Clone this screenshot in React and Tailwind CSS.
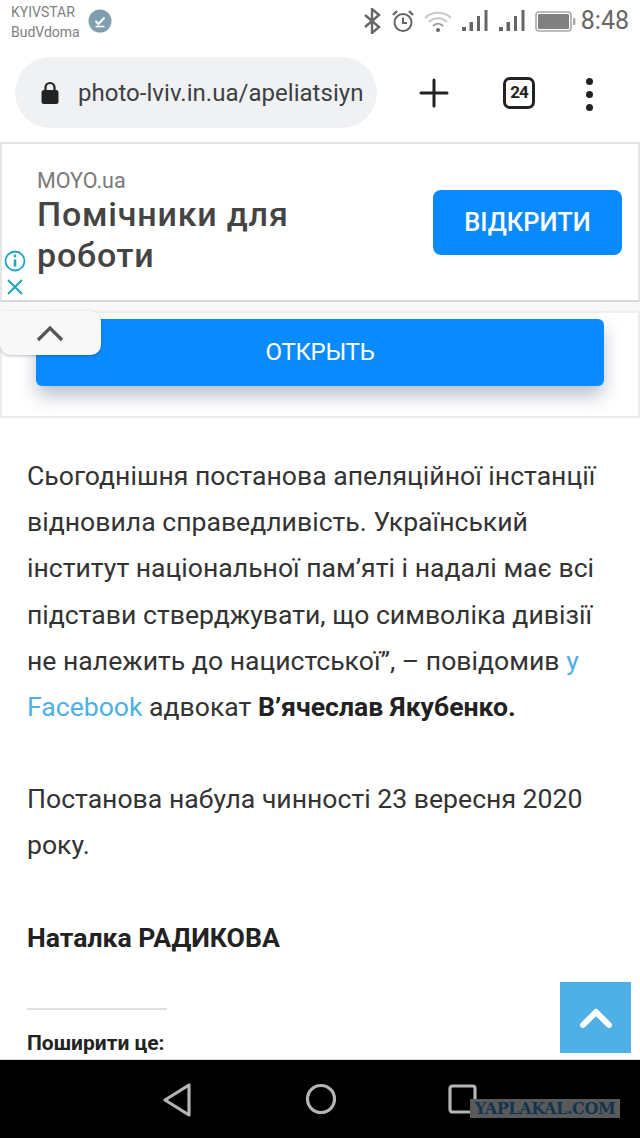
const R = { fontFamily: 'Roboto, sans-serif' };

function StatusBar() {
  return (
    <div className="h-[43px] flex items-start justify-between pl-[11px] pr-[11px] text-[#6f6f6f]">
      <div className="flex items-start gap-[8px]">
        <div className="flex flex-col text-[14px] leading-[20px] pt-[2px] text-[#808080]">
          <span>KYIVSTAR</span>
          <span>BudVdoma</span>
        </div>
        <svg width="24" height="24" viewBox="0 0 24 24" className="mt-[9px]">
          <circle cx="12" cy="12" r="11.5" fill="#7f9fae" />
          <path d="M7.5 12l3 3 6-6.5" fill="none" stroke="#fff" strokeWidth="2" />
          <path d="M7.5 17.5h9" stroke="#fff" strokeWidth="1.6" />
        </svg>
      </div>
      <div className="flex items-center gap-[9px] pt-[8px]">
        <svg width="19" height="26" viewBox="0 0 19 26" fill="none" stroke="#666" strokeWidth="2.4">
          <path d="M2 7l14 12-7 6V1l7 6L2 19" />
        </svg>
        <svg width="24" height="24" viewBox="0 0 24 24" fill="none" stroke="#666" strokeWidth="2">
          <circle cx="12" cy="13.5" r="8.5" />
          <path d="M12 8.5v5.5h4" />
          <path d="M2 6l4-4M22 6l-4-4" strokeWidth="2.4" />
        </svg>
        <svg width="30" height="22" viewBox="0 0 30 22" fill="none" stroke="#c9c9c9" strokeWidth="2" className="-ml-[1px]">
          <path d="M2 8c7-7 19-7 26 0" />
          <path d="M6 12c5-5 13-5 18 0" />
          <path d="M10 16c3-3 7-3 10 0" stroke="#9a9a9a" />
          <circle cx="15" cy="20" r="2" fill="#666" stroke="none" />
        </svg>
        <div className="flex gap-[10px] items-end">
          {[0, 1].map((k) => (
            <svg key={k} width="27" height="22" viewBox="0 0 27 22" fill="#666">
              <rect x="0" y="17" width="4" height="4" />
              <rect x="7.5" y="12" width="3.5" height="9" />
              <rect x="15" y="6" width="3" height="15" />
              <rect x="22.5" y="0" width="3" height="21" />
            </svg>
          ))}
        </div>
        <svg width="41" height="21" viewBox="0 0 41 21">
          <rect x="1" y="1" width="35" height="19" rx="3" fill="none" stroke="#a8a8a8" strokeWidth="1.6" />
          <rect x="3" y="3" width="31" height="15" rx="1" fill="#808080" />
          <rect x="38" y="7" width="2.4" height="7" rx="1" fill="#a8a8a8" />
        </svg>
        <span className="text-[25px] leading-[26px] text-[#666] -ml-[4px]">8:48</span>
      </div>
    </div>
  );
}

function Toolbar() {
  return (
    <div className="h-[100px] flex items-start pl-[15px] pt-[14px]">
      <div className="w-[362px] h-[71px] rounded-[36px] bg-[#f0f1f3] flex items-center pl-[25px] overflow-hidden">
        <svg width="20" height="24" viewBox="0 0 20 24" className="shrink-0">
          <path d="M5.5 10V6.5a4.5 4.5 0 0 1 9 0V10" fill="none" stroke="#222" strokeWidth="2.2" />
          <rect x="1.5" y="9" width="17" height="14" rx="2.5" fill="#222" />
        </svg>
        <span className="ml-[18px] text-[24px] leading-[30px] text-[#3c4043] whitespace-nowrap tracking-[0.03px]">
          photo-lviv.in.ua/apeliatsiyn
        </span>
      </div>
      <svg width="32" height="32" viewBox="0 0 32 32" className="ml-[41px] mt-[20px]" fill="none" stroke="#222" strokeWidth="3" strokeLinecap="round">
        <path d="M16 3v26M3 16h26" />
      </svg>
      <div className="ml-[53px] mt-[20px] w-[32px] h-[32px] rounded-[7px] border-[3px] border-[#222] flex items-center justify-center text-[17px] font-bold text-[#222] tracking-[-1px]">
        24
      </div>
      <div className="ml-[51px] mt-[21px] flex flex-col gap-[6px]">
        <div className="w-[7px] h-[7px] rounded-full bg-[#222]" />
        <div className="w-[7px] h-[7px] rounded-full bg-[#222]" />
        <div className="w-[7px] h-[7px] rounded-full bg-[#222]" />
      </div>
    </div>
  );
}

function Ad() {
  return (
    <div className="relative -mt-[1px] h-[160px] border-[2px] border-[#e4e4e4] border-b-[#d8d8d8] bg-white flex items-start justify-between pl-[35px] pr-[16px]">
      <div className="pt-[25px]">
        <div className="text-[21.5px] leading-[24px] text-[#7a7a7a]">MOYO.ua</div>
        <div className="text-[34px] leading-[41px] font-medium text-[#444] tracking-[0.8px] mt-[1px] w-[320px]">
          Помічники для роботи
        </div>
      </div>
      <div className="mt-[46px] w-[189px] h-[65px] rounded-[8px] bg-[#0a8aff] text-white text-[25.5px] font-medium flex items-center justify-center">
        ВІДКРИТИ
      </div>
      <div className="absolute left-[2px] bottom-[4px] flex flex-col items-center gap-[6px]">
        <svg width="22" height="22" viewBox="0 0 22 22" fill="none" stroke="#1ca6c4" strokeWidth="1.8">
          <circle cx="11" cy="11" r="9.5" />
          <path d="M11 9.5v7" strokeWidth="2.6" />
          <circle cx="11" cy="6" r="1.4" fill="#1ca6c4" stroke="none" />
        </svg>
        <svg width="18" height="18" viewBox="0 0 18 18" fill="none" stroke="#1ca6c4" strokeWidth="2">
          <path d="M2 2l14 14M16 2L2 16" />
        </svg>
      </div>
    </div>
  );
}

function OpenBlock() {
  return (
    <>
      <div className="h-[9px] bg-[#f8f8f8]" />
      <div className="relative h-[107px] border-[2px] border-[#ececec] border-t-[#f0f0f0] bg-white pl-[34px] pr-[34px] pt-[6px]">
        <div className="h-[67px] rounded-[6px] bg-[#0a8aff] text-white text-[24px] flex items-center justify-center shadow-[0_10px_18px_rgba(60,80,110,0.35)] tracking-[-0.3px] pb-[2px]">
          ОТКРЫТЬ
        </div>
        <div className="absolute -left-[2px] -top-[2px] w-[101px] h-[44px] rounded-b-[10px] rounded-tr-[10px] bg-[#f8f8f8] shadow-[0_1px_3px_rgba(0,0,0,0.25)] flex items-center pl-[36px]">
          <svg width="28" height="18" viewBox="0 0 28 18" fill="none" stroke="#555" strokeWidth="3.2">
            <path d="M2 16L14 4l12 12" />
          </svg>
        </div>
      </div>
    </>
  );
}

function Article() {
  return (
    <div className="flex-1 px-[27px] pt-[35px] text-[26.6px] leading-[46.2px] text-[#333] overflow-hidden">
      <p className="whitespace-nowrap">Сьогоднішня постанова апеляційної інстанції</p>
      <p className="whitespace-nowrap">відновила справедливість. Український</p>
      <p className="whitespace-nowrap">інститут національної пам’яті і надалі має всі</p>
      <p className="whitespace-nowrap">підстави стверджувати, що символіка дивізії</p>
      <p className="whitespace-nowrap">
        не належить до нацистської”, – повідомив <span className="text-[#4fb0e8]">у</span>
      </p>
      <p className="whitespace-nowrap">
        <span className="text-[#4fb0e8]">Facebook</span> адвокат <b className="font-bold text-[#222]">В’ячеслав Якубенко.</b>
      </p>
      <p className="mt-[46px] whitespace-nowrap">Постанова набула чинності 23 вересня 2020</p>
      <p>року.</p>
      <p className="mt-[46px] font-bold text-[#222]">Наталка РАДИКОВА</p>
      <div className="mt-[47px] w-[140px] h-[2px] bg-[#e0e0e0]" />
      <p className="mt-[18px] text-[21px] leading-[30px] font-bold text-[#222]">Поширити це:</p>
    </div>
  );
}

function NavBar() {
  return (
    <div className="relative h-[79px] shrink-0 bg-black flex items-start justify-center gap-[111px] pt-[23px] border-t border-t-[#d8d8d8]">
      <svg width="32" height="34" viewBox="0 0 32 34" fill="none" stroke="#b5b5b5" strokeWidth="3.2" strokeLinejoin="round">
        <path d="M27 2v30L3 17z" />
      </svg>
      <svg width="32" height="32" viewBox="0 0 32 32" fill="none" stroke="#b5b5b5" strokeWidth="3.2">
        <circle cx="16" cy="16" r="13.5" />
      </svg>
      <svg width="30" height="30" viewBox="0 0 30 30" fill="none" stroke="#b5b5b5" strokeWidth="3.2" className="mt-[1px]">
        <rect x="2" y="2" width="25" height="26" rx="2.5" />
      </svg>
      <div className="absolute left-[470px] top-[39px] w-[150px] h-[19px] bg-[#5a5a5a] flex items-center justify-center text-[16px] leading-[19px] font-bold text-[#12344f]" style={{ fontFamily: '"DejaVu Serif", serif', letterSpacing: '-0.4px' }}>
        YAPLAKAL.COM
      </div>
    </div>
  );
}

export default function App() {
  return (
    <div className="relative w-[640px] h-[1138px] bg-white flex flex-col overflow-hidden" style={R}>
      <StatusBar />
      <Toolbar />
      <Ad />
      <OpenBlock />
      <Article />
      <NavBar />
      <div className="absolute left-[560px] top-[982px] w-[71px] h-[71px] bg-[#4fb0e8] flex items-center justify-center">
        <svg width="34" height="24" viewBox="0 0 34 24" fill="none" stroke="#fff" strokeWidth="6" strokeLinecap="round" strokeLinejoin="round">
          <path d="M4 19L17 6l13 13" />
        </svg>
      </div>
    </div>
  );
}
